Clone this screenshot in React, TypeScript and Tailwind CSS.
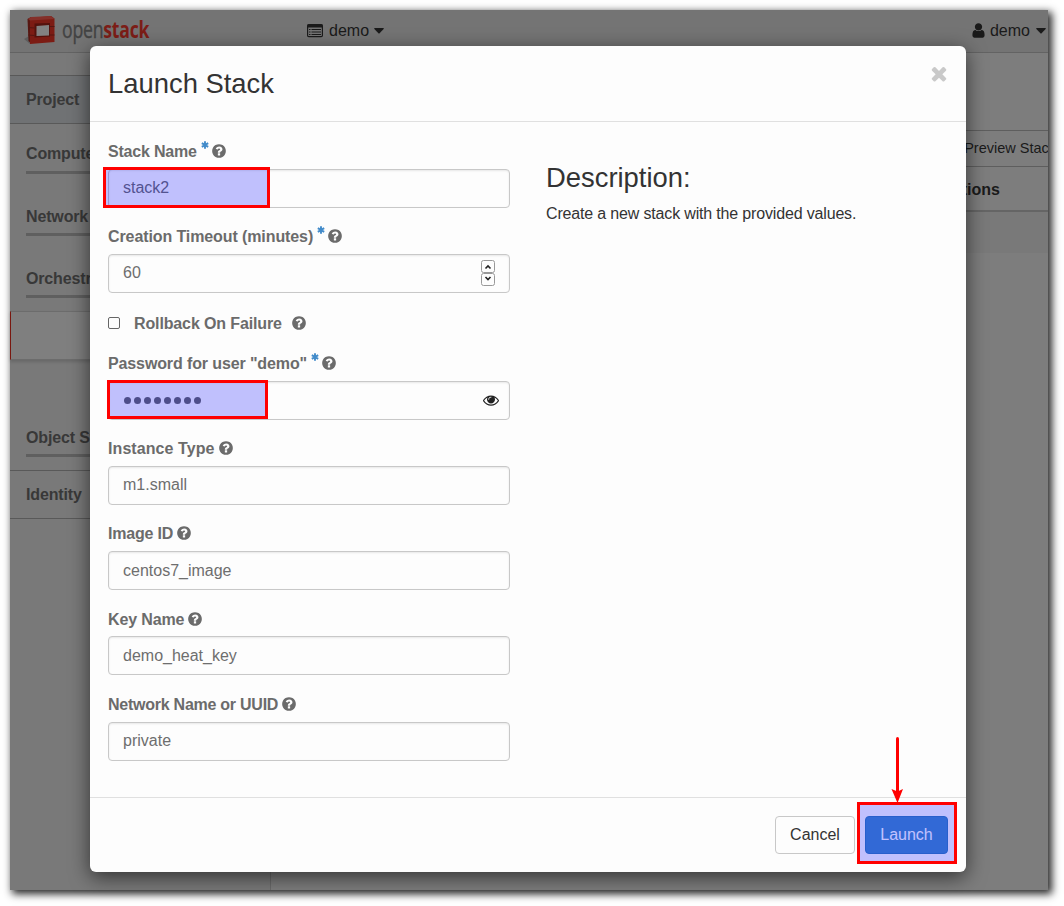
import React from "react";

const QUESTION =
  "M1024 1376v-192q0-14-9-23t-23-9h-192q-14 0-23 9t-9 23v192q0 14 9 23t23 9h192q14 0 23-9t9-23zm256-672q0-88-55.5-163t-138.5-116-170-41q-243 0-371 213-15 24 8 42l132 100q7 6 19 6 16 0 25-12 53-68 86-92 34-24 86-24 48 0 85.5 26t37.5 59q0 38-20 61t-68 45q-63 28-115.5 86.5t-52.5 125.5v36q0 14 9 23t23 9h192q14 0 23-9t9-23q0-19 21.5-49.5t54.5-49.5q32-18 49-28.5t46-35 44.5-48 28-60.5 12.5-81zm384 192q0 209-103 385.5t-279.5 279.5-385.5 103-385.5-103-279.5-279.5-103-385.5 103-385.5 279.5-279.5 385.5-103 385.5 103 279.5 279.5 103 385.5z";
const EYE =
  "M1664 960q-152-236-381-353 61 104 61 225 0 185-131.5 316.5t-316.5 131.5-316.5-131.5-131.5-316.5q0-121 61-225-229 117-381 353 133 205 333.5 326.5t434.5 121.5 434.5-121.5 333.5-326.5zm-720-384q0-20-14-34t-34-14q-125 0-214.5 89.5t-89.5 214.5q0 20 14 34t34 14 34-14 14-34q0-86 61-147t147-61q20 0 34-14t14-34zm848 384q0 34-20 69-140 230-376.5 368.5t-499.5 138.5-499.5-139-376.5-368q-20-35-20-69t20-69q140-229 376.5-368t499.5-139 499.5 139 376.5 368q20 35 20 69z";
const TIMES =
  "M1490 1322q0 40-28 68l-136 136q-28 28-68 28t-68-28l-294-294-294 294q-28 28-68 28t-68-28l-136-136q-28-28-28-68t28-68l294-294-294-294q-28-28-28-68t28-68l136-136q28-28 68-28t68 28l294 294 294-294q28-28 68-28t68 28l136 136q28 28 28 68t-28 68l-294 294 294 294q28 28 28 68z";
const USER =
  "M1536 1399q0 109-62.5 187t-150.5 78h-854q-88 0-150.5-78t-62.5-187q0-85 8.5-160.5t31.5-152 58.5-131 94-89 134.5-34.5q131 128 313 128t313-128q76 0 134.5 34.5t94 89 58.5 131 31.5 152 8.5 160.5zm-256-887q0 159-112.5 271.5t-271.5 112.5-271.5-112.5-112.5-271.5 112.5-271.5 271.5-112.5 271.5 112.5 112.5 271.5z";

function Glyph({ d, className }: { d: string; className: string }) {
  return (
    <svg viewBox="0 0 1792 1792" className={"shrink-0 " + className} fill="currentColor">
      <path d={d} />
    </svg>
  );
}

function Caret() {
  return (
    <svg viewBox="0 0 10 6" className="ml-[5px] h-[6px] w-[10px]" fill="currentColor">
      <path d="M0.8 0H9.2Q10.3 0.2 9.6 1L5.6 5.2Q5 5.8 4.4 5.2L0.4 1Q-0.3 0.2 0.8 0Z" />
    </svg>
  );
}

function Logo() {
  return (
    <div className="flex h-[42px] w-[140px] items-center pl-[14px]">
      <svg viewBox="0 0 32 30" className="-mt-[2px] h-[30px] w-[32px] shrink-0">
        <path d="M0 24L5 21L6 29Z" fill="#5e5e5e" />
        <path d="M3.5 4L7 2L7 28.5L4.5 26Z" fill="#571711" />
        <path d="M6 3L27 1L30.5 3.5L30.5 27L6 29Z" fill="#7c1c14" />
        <path d="M4 4L7 2L27 1L30.5 4L6 5.5Z" fill="#84302a" />
        <path d="M10.5 8.5L26 8L26 21.5L10.5 22.5Z" fill="#54120d" />
        <path d="M12.5 11L25 10L25 20.5L12.5 21Z" fill="#828282" />
        <path d="M4 12.5L10.5 13M4 20L10.5 20.5M26 11.5H30.5M26 20H30.5" stroke="#541611" strokeWidth="1" />
      </svg>
      <span className="-mt-[4px] ml-[6px] inline-block origin-left scale-x-[.735] whitespace-nowrap font-['Open_Sans','Noto_Sans',sans-serif] text-[24px] leading-[30px] font-medium tracking-[-0.3px] text-[#434343] [-webkit-text-stroke:0.4px]">
        open<span className="font-bold text-[#7c1d17] [-webkit-text-stroke:0px]">stack</span>
      </span>
    </div>
  );
}

function NavGroup({ label, className }: { label: string; className: string }) {
  return (
    <div className={"ml-4 overflow-hidden border-b-[3px] border-[#5f5f5f] whitespace-nowrap " + className}>
      {label}
    </div>
  );
}

function Label({ text, required, tracking }: { text: string; required?: boolean; tracking: string }) {
  return (
    <div className="flex h-[20px] items-center whitespace-nowrap pt-[2px] font-bold text-[#6b6b6b]">
      <span className={tracking}>{text}</span>
      {required && (
        <svg viewBox="0 0 8 8" className="mr-[-1px] mb-[15px] ml-[4px] h-[8px] w-[8px]" stroke="#428bca" strokeWidth="1.9">
          <path d="M4 0.2V7.8M0.8 2.1L7.2 5.9M7.2 2.1L0.8 5.9" />
        </svg>
      )}
      <Glyph d={QUESTION} className="mb-[2px] ml-[3px] h-4 w-4" />
    </div>
  );
}

function Box({ children, raised }: { children: React.ReactNode; raised?: boolean }) {
  return (
    <div
      className={
        "relative flex h-[39px] w-[402px] items-center rounded-[4px] border border-[#c8c8c8] pl-[14px] text-[#6e6e6e] shadow-[inset_0_1px_2px_rgba(0,0,0,.09)] " +
        (raised ? "pb-[2px]" : "")
      }
    >
      {children}
    </div>
  );
}

export default function App() {
  return (
    <div className="h-[906px] w-[1064px] overflow-hidden bg-white pt-[10px] pl-[10px] font-['Liberation_Sans',Arial,sans-serif] text-[16px] leading-[20px]">
      <div className="relative h-[880px] w-[1038px] bg-[#7d7d7d] shadow-[3px_3px_8px_1px_rgba(0,0,0,.85)]">
        <header className="flex h-[43px] items-center border-b border-[#636363] bg-[#747474] text-[#1a1a1a]">
          <Logo />
          <div className="ml-[157px] flex items-center">
            <svg viewBox="0 0 16 14" className="mr-[6px] h-[14px] w-[16px]" fill="none" stroke="currentColor">
              <rect x=".6" y=".6" width="14.8" height="12" rx="1.2" strokeWidth="1.2" />
              <path d="M0.6 2H15.4" strokeWidth="3" />
              <path d="M2 5.5H3.5M2 8H3.5M2 10.5H3.5M4.5 5.5H14M4.5 8H14M4.5 10.5H14" strokeWidth="1" />
            </svg>
            demo
            <Caret />
          </div>
          <div className="ml-auto flex items-center pr-[2px]">
            <Glyph d={USER} className="mr-[3px] mb-[2px] h-[17px] w-[17px]" />
            <span className="mr-[1px]">demo</span>
            <Caret />
          </div>
        </header>

        <div className="flex h-[837px]">
          <aside className="w-[261px] border-r border-[#6a6a6a] bg-[#797979] pt-[22px] font-bold tracking-[-0.15px] text-[#383838]">
            <div className="flex h-[49px] items-center border-y border-[#595959] bg-[#707274] pl-4">Project</div>
            <NavGroup label="Compute" className="mt-[20px] h-[30px]" />
            <NavGroup label="Network" className="mt-[33px] h-[29px]" />
            <NavGroup label="Orchestration" className="mt-[33px] h-[29px]" />
            <div className="mt-[13px] h-[49px] border-y border-l border-y-[#6c6c6c] border-l-[#79170f] bg-[#7f7f7f] shadow-[0_2px_3px_rgba(0,0,0,.15)]" />
            <NavGroup label="Object Store" className="mt-[68px] h-[29px]" />
            <div className="mt-[13px] flex h-[49px] items-center border-y border-[#595959] pl-4">Identity</div>
          </aside>
          <main className="flex flex-1 flex-col items-end overflow-hidden pt-[77px] text-[#1a1a1a]">
            <div className="flex h-[37px] w-full items-center justify-end border-y border-[#5e5e5e] pb-[2px] text-[14.5px]">
              <span className="-mr-[8px] whitespace-nowrap">Preview Stack</span>
            </div>
            <div className="flex h-[45px] w-full items-center justify-end border-b-2 border-[#656565] pt-[2px] pr-[48px] font-bold">
              Actions
            </div>
            <div className="h-[41px] w-full bg-[#797979]" />
          </main>
        </div>

        <section className="absolute top-[36px] left-[80px] flex h-[826px] w-[876px] flex-col rounded-[6px] bg-[#fdfdfd] shadow-[0_5px_20px_rgba(0,0,0,.6)]">
          <div className="flex h-[76px] items-center justify-between border-b border-[#e0e0e0] pr-[16px] pl-[18px]">
            <h1 className="text-[27.4px] leading-[30px] text-[#333]">Launch Stack</h1>
            <Glyph d={TIMES} className="mb-[20px] h-[23px] w-[22px] text-[#c9c9c9]" />
          </div>

          <div className="flex h-[675px] pt-[19px] pl-[18px]">
            <form className="w-[402px]">
              <div className="relative h-[85px]">
                <Label text="Stack Name" required tracking="tracking-[-0.2px]" />
                <div className="mt-[8px]">
                  <Box raised>stack2</Box>
                </div>
                <div className="absolute top-[26px] left-[-5px] h-[41px] w-[167px] border-[3px] border-[#ff0000] bg-[#0000ff]/24" />
              </div>
              <div className="h-[87px]">
                <Label text="Creation Timeout (minutes)" required tracking="tracking-[-0.1px]" />
                <div className="mt-[8px]">
                  <Box raised>
                    60
                    <svg viewBox="0 0 14 26" className="absolute top-[5px] right-[14px] h-[26px] w-[14px]" fill="none">
                      <rect x=".5" y=".5" width="13" height="12" rx="2" stroke="#999" />
                      <rect x=".5" y="13.5" width="13" height="12" rx="2" stroke="#999" />
                      <path d="M4.5 8.5L7 6L9.5 8.5M4.5 17L7 19.5L9.5 17" stroke="#222" strokeWidth="1.6" />
                    </svg>
                  </Box>
                </div>
              </div>
              <div className="flex h-[40px] items-start">
                <span className="mt-[4px] h-[12px] w-[12px] rounded-[2px] border border-[#666]" />
                <div className="ml-[14px] flex h-[20px] items-center pt-[2px] font-bold tracking-[-0.13px] text-[#6b6b6b]">
                  Rollback On Failure
                  <Glyph d={QUESTION} className="mb-[2px] ml-[9px] h-4 w-4" />
                </div>
              </div>
              <div className="relative h-[85px]">
                <Label text={'Password for user "demo"'} required tracking="tracking-[-0.12px]" />
                <div className="mt-[8px]">
                  <Box>
                    <div className="ml-[1px] flex gap-[3px]">
                      {[0, 1, 2, 3, 4, 5, 6, 7].map((i) => (
                        <span key={i} className="h-[7px] w-[7px] rounded-full bg-[#666]" />
                      ))}
                    </div>
                    <Glyph d={EYE} className="absolute top-[10px] right-[10px] h-4 w-4 text-[#222]" />
                  </Box>
                </div>
                <div className="absolute top-[27px] left-[-1px] h-[39px] w-[161px] border-[3px] border-[#ff0000] bg-[#0000ff]/24" />
              </div>
              <div className="h-[85px]">
                <Label text="Instance Type" tracking="tracking-[0.08px]" />
                <div className="mt-[8px]">
                  <Box raised>m1.small</Box>
                </div>
              </div>
              <div className="h-[86px]">
                <Label text="Image ID" tracking="tracking-[-0.2px]" />
                <div className="mt-[8px]">
                  <Box>centos7_image</Box>
                </div>
              </div>
              <div className="h-[85px]">
                <Label text="Key Name" tracking="tracking-[-0.14px]" />
                <div className="mt-[7px]">
                  <Box>demo_heat_key</Box>
                </div>
              </div>
              <div>
                <Label text="Network Name or UUID" tracking="tracking-[-0.25px]" />
                <div className="mt-[8px]">
                  <Box raised>private</Box>
                </div>
              </div>
            </form>
            <div className="ml-[36px] pt-[22px] text-[#333]">
              <h2 className="text-[27.4px] leading-[30px]">Description:</h2>
              <p className="mt-[11px] whitespace-nowrap tracking-[-0.165px]">Create a new stack with the provided values.</p>
            </div>
          </div>

          <div className="relative flex h-[75px] items-start justify-end border-t border-[#e0e0e0] pt-[18px] pr-[18px]">
            <div className="flex h-[38px] w-[80px] items-center justify-center rounded-[4px] border border-[#c8c8c8] text-[#333]">
              Cancel
            </div>
            <div className="ml-[10px] flex h-[38px] w-[83px] items-center justify-center rounded-[4px] border border-[#357ebd] bg-[#428bca] text-white">
              Launch
            </div>
            <div className="absolute top-[4px] right-[9px] h-[62px] w-[100px] border-[3px] border-[#ff0000] bg-[#0000ff]/24" />
            <svg viewBox="0 0 12 66" className="absolute top-[-61px] right-[63px] h-[66px] w-[12px]">
              <path d="M6.5 1.5V56" stroke="#f00" strokeWidth="3" strokeLinecap="round" />
              <path d="M0.5 52L6.5 54.5L12 52L6.5 66Z" fill="#f00" />
            </svg>
          </div>
        </section>
      </div>
    </div>
  );
}
